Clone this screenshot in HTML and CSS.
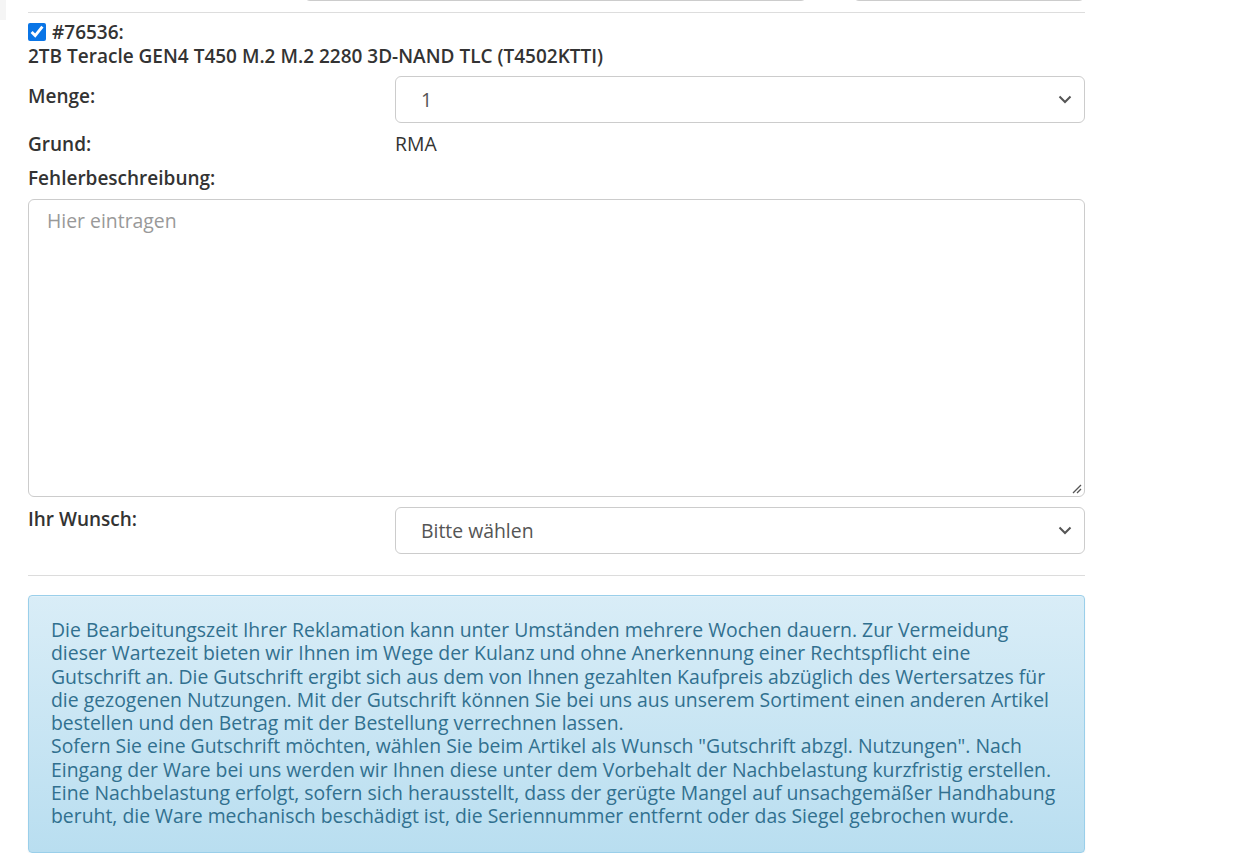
FILE: index.html
```html
<!DOCTYPE html>
<html lang="de">

<head>
    <meta charset="UTF-8">
    <title>Reklamation</title>
    <link rel="stylesheet" href="styles.css">
</head>

<body>

    <div class="seitenrand"></div>

    <main class="rma">

        <div class="vorherig">
            <div class="feld feld-mitte"></div>
            <div class="feld feld-rechts"></div>
        </div>

        <hr class="trenner">

        <div class="artikel">
            <label class="artikelnr"><input type="checkbox" checked> #76536:</label>
            <div class="artikelname">2TB Teracle GEN4 T450 M.2 M.2 2280 3D-NAND TLC (T4502KTTI)</div>
        </div>

        <div class="zeile">
            <div class="label">Menge:</div>
            <div class="auswahl">
                <span>1</span>
                <svg class="pfeil" width="14" height="9" viewBox="0 0 14 9"><path d="M1.5 1.5 L7 7 L12.5 1.5" fill="none" stroke="#555" stroke-width="2"/></svg>
            </div>
        </div>

        <div class="zeile zeile-text">
            <div class="label">Grund:</div>
            <div class="wert">RMA</div>
        </div>

        <div class="label label-block">Fehlerbeschreibung:</div>
        <div class="textfeld">
            <span class="platzhalter">Hier eintragen</span>
            <svg class="greifer" width="12" height="12" viewBox="0 0 12 12"><path d="M11 3 L3 11 M11 7 L7 11" stroke="#555" stroke-width="1.3"/></svg>
        </div>

        <div class="zeile zeile-wunsch">
            <div class="label">Ihr Wunsch:</div>
            <div class="auswahl">
                <span>Bitte wählen</span>
                <svg class="pfeil" width="14" height="9" viewBox="0 0 14 9"><path d="M1.5 1.5 L7 7 L12.5 1.5" fill="none" stroke="#555" stroke-width="2"/></svg>
            </div>
        </div>

        <hr class="trenner trenner-unten">

        <div class="hinweis">
            Die Bearbeitungszeit Ihrer Reklamation kann unter Umständen mehrere Wochen dauern. Zur Vermeidung dieser Wartezeit bieten wir Ihnen im Wege der Kulanz und ohne Anerkennung einer Rechtspflicht eine Gutschrift an. Die Gutschrift ergibt sich aus dem von Ihnen gezahlten Kaufpreis abzüglich des Wertersatzes für die gezogenen Nutzungen. Mit der Gutschrift können Sie bei uns aus unserem Sortiment einen anderen Artikel bestellen und den Betrag mit der Bestellung verrechnen lassen.<br>
            Sofern Sie eine Gutschrift möchten, wählen Sie beim Artikel als Wunsch "Gutschrift abzgl. Nutzungen". Nach Eingang der Ware bei uns werden wir Ihnen diese unter dem Vorbehalt der Nachbelastung kurzfristig erstellen. Eine Nachbelastung erfolgt, sofern sich herausstellt, dass der gerügte Mangel auf unsachgemäßer Handhabung beruht, die Ware mechanisch beschädigt ist, die Seriennummer entfernt oder das Siegel gebrochen wurde.
        </div>

    </main>

</body></html>
```

FILE: styles.css
```css
body {
    margin: 0;
    font-family: 'Open Sans', sans-serif;
    color: #333;
    background-color: #fff;
}

.seitenrand {
    position: absolute;
    top: 0;
    left: 0;
    width: 6px;
    height: 20px;
    background-color: #f5f5f5;
}

.rma {
    width: 1057px;
    margin-left: 28px;
}

.vorherig {
    display: flex;
    height: 2px;
    overflow: hidden;
}

.feld {
    height: 40px;
    margin-top: -39px;
    border: 1px solid #ccc;
    border-radius: 6px;
    box-sizing: border-box;
}

.feld-mitte {
    width: 503px;
    margin-left: 276px;
}

.feld-rechts {
    width: 232px;
    margin-left: 46px;
}

.trenner {
    border: 0;
    border-top: 1px solid #ddd;
    margin: 10px 0 0 0;
}

.artikel {
    font-weight: 600;
    font-size: 19px;
    line-height: 24px;
    margin-top: 7px;
}

.artikelnr {
    display: flex;
    align-items: center;
    gap: 6px;
}

.artikelnr input {
    width: 18px;
    height: 18px;
    margin: 0;
    accent-color: #0a75e6;
}

.zeile {
    display: grid;
    grid-template-columns: 367px 1fr;
    margin-top: 8px;
}

.label {
    font-weight: 600;
    font-size: 19px;
    line-height: 24px;
    padding-top: 8px;
}

.auswahl {
    height: 47px;
    box-sizing: border-box;
    border: 1px solid #ccc;
    border-radius: 6px;
    display: flex;
    align-items: center;
    justify-content: space-between;
    padding: 0 12px 0 25px;
    font-size: 19.4px;
    color: #555;
}

.zeile-text {
    margin-top: 9px;
}

.zeile-text .label {
    padding-top: 0;
}

.wert {
    font-size: 19.4px;
    line-height: 24px;
}

.label-block {
    padding-top: 10px;
}

.textfeld {
    position: relative;
    height: 298px;
    box-sizing: border-box;
    border: 1px solid #ccc;
    border-radius: 6px;
    margin-top: 9px;
    padding: 9px 18px;
    font-size: 19.4px;
    line-height: 24px;
}

.platzhalter {
    color: #999;
}

.greifer {
    position: absolute;
    right: 2px;
    bottom: 2px;
}

.zeile-wunsch {
    margin-top: 10px;
}

.zeile-wunsch .label {
    padding-top: 0;
}

.trenner-unten {
    margin-top: 21px;
    border-top-color: #dcdcdc;
}

.hinweis {
    margin-top: 19px;
    padding: 22px 22px 24px 22px;
    border: 1px solid #9acfea;
    border-radius: 4px;
    background-image: linear-gradient(to bottom, #d9edf7 0, #b9def0 100%);
    color: #31708f;
    font-size: 19.4px;
    line-height: 23.3px;
    box-shadow: inset 0 1px 0 rgba(255, 255, 255, .25), 0 1px 2px rgba(0, 0, 0, .05);
}
```
